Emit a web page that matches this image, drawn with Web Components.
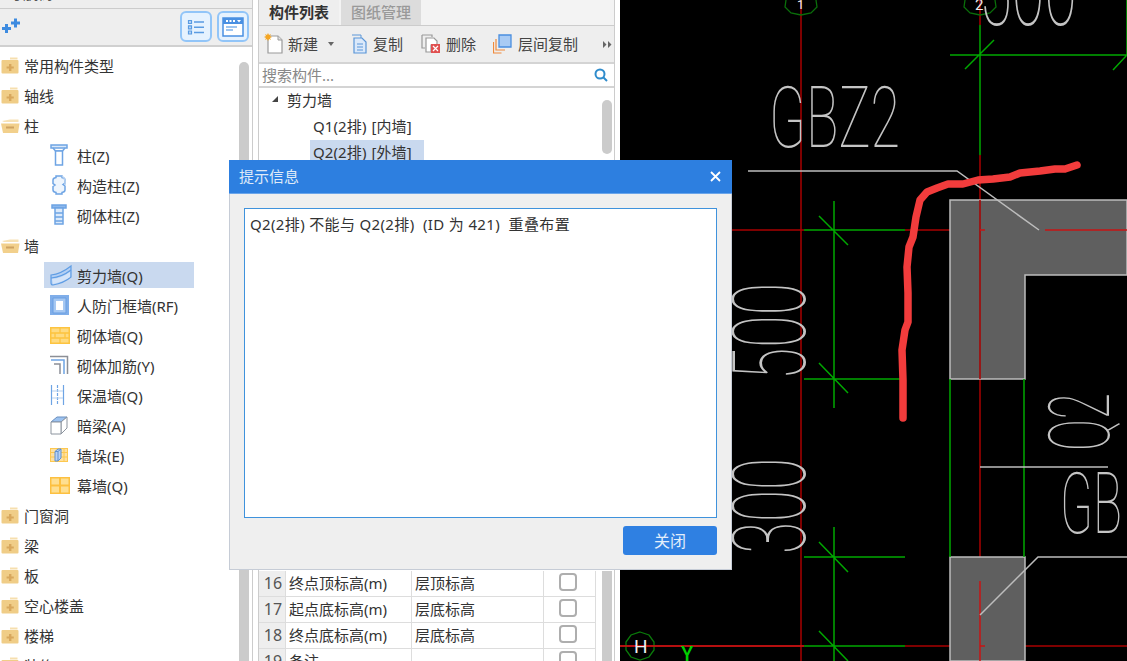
<!DOCTYPE html>
<html lang="zh">
<head>
<meta charset="utf-8">
<title>构件列表</title>
<style>
html,body{margin:0;padding:0;height:661px;overflow:hidden;background:#fff}
body{font:15px "Noto Sans","Noto Sans CJK SC",sans-serif;color:#333}
</style>
</head>
<body>
<app-shell>
  <nav-panel slot="nav">
    <tree-row icon="closed">常用构件类型</tree-row>
    <tree-row icon="closed">轴线</tree-row>
    <tree-row icon="open">柱</tree-row>
    <tree-row level="2" icon="column">柱(Z)</tree-row>
    <tree-row level="2" icon="gzz">构造柱(Z)</tree-row>
    <tree-row level="2" icon="qtz">砌体柱(Z)</tree-row>
    <tree-row icon="open">墙</tree-row>
    <tree-row level="2" icon="shear" selected>剪力墙(Q)</tree-row>
    <tree-row level="2" icon="frame">人防门框墙(RF)</tree-row>
    <tree-row level="2" icon="brick">砌体墙(Q)</tree-row>
    <tree-row level="2" icon="rebar">砌体加筋(Y)</tree-row>
    <tree-row level="2" icon="insul">保温墙(Q)</tree-row>
    <tree-row level="2" icon="beam">暗梁(A)</tree-row>
    <tree-row level="2" icon="pier">墙垛(E)</tree-row>
    <tree-row level="2" icon="curtain">幕墙(Q)</tree-row>
    <tree-row icon="closed">门窗洞</tree-row>
    <tree-row icon="closed">梁</tree-row>
    <tree-row icon="closed">板</tree-row>
    <tree-row icon="closed">空心楼盖</tree-row>
    <tree-row icon="closed">楼梯</tree-row>
    <tree-row icon="closed">装修</tree-row>
  </nav-panel>
  <comp-panel slot="comp">
    <prop-row n="16" name="终点顶标高(m)" value="层顶标高"></prop-row>
    <prop-row n="17" name="起点底标高(m)" value="层底标高"></prop-row>
    <prop-row n="18" name="终点底标高(m)" value="层底标高"></prop-row>
    <prop-row n="19" name="备注" value=""></prop-row>
  </comp-panel>
  <cad-view slot="cad"></cad-view>
</app-shell>
<msg-dialog heading="提示信息" action="关闭">Q2(2排) 不能与 Q2(2排) &nbsp;(ID 为 421) &nbsp;重叠布置</msg-dialog>

<script>
const ICONS = {
closed:`<svg width="18" height="18" viewBox="0 0 18 18"><path d="M9 1.500h7.500v2H9z" fill="#f6dfae"/><path d="M1 5.500Q1 4.500 2 4.500H17Q18 4.500 18 5.500V17Q18 18 17 18H2Q1 18 1 17z" fill="#f0cd87" transform="translate(-.5 -.5)"/><path d="M8 8h2.400v2.400h2.400v2.200h-2.400v2.400H8v-2.400H5.600v-2.200H8z" fill="#d8a75c"/></svg>`,
open:`<svg width="19" height="18" viewBox="0 0 19 18"><path d="M1 5l8-1.500h8.500V6H3z" fill="#f7e2b5"/><path d="M0 7.500H18.500L17 17H2z" fill="#f2d08c"/><path d="M5 10.500h8v2H5z" fill="#cfa261"/></svg>`,
column:`<svg width="18" height="22" viewBox="0 0 18 22" fill="none" stroke="#6ea4e4" stroke-width="1.500"><path d="M1 1h16v3H1z" fill="#dbe9fa"/><path d="M3 4l2.500 3h7L15 4" /><path d="M5.500 7h7v14h-7z" fill="#fff"/></svg>`,
gzz:`<svg width="18" height="22" viewBox="0 0 18 22" fill="none" stroke="#6ea4e4" stroke-width="1.500"><path d="M6 2h6v1.500q3 .5 3 2.500v3l-2 1.500 2 1.500v4q0 2-3 2.500V20H6v-1.500q-3-.5-3-2.500v-3.500l2-1.500-2-1.500V6q0-2 3-2.500z" fill="#eef5fd"/><path d="M12 2q4 3 3 9" stroke="#b7d1f0"/></svg>`,
qtz:`<svg width="18" height="22" viewBox="0 0 18 22" fill="none" stroke="#6ea4e4" stroke-width="1.500"><path d="M2 1h14v3H2z" fill="#8db8ec"/><path d="M5 4h8v16H5z" fill="#dbe9fa"/><path d="M5 9h8M5 13h8M5 17h8" stroke="#6ea4e4"/></svg>`,
shear:`<svg width="22" height="22" viewBox="0 0 22 22"><path d="M1 11Q11 10 21 2V13Q14 19 3 21Q1 21 1 19z" fill="#b4d0f4" stroke="#5f9de4" stroke-width="1.200"/><path d="M1 14Q12 13 21 6" fill="none" stroke="#5f9de4" stroke-width="1.200"/><path d="M2 15Q12 14 20 8V13Q13 18 3 20z" fill="#d4e4f9"/></svg>`,
frame:`<svg width="19" height="20" viewBox="0 0 19 20"><path d="M0 0h19v20H0z" fill="#80aee9"/><path d="M3 3h13v15H3z" fill="#a6c8f2" stroke="#6a9fe2"/><path d="M6 6h7v9H6z" fill="#fff"/></svg>`,
brick:`<svg width="20" height="17" viewBox="0 0 20 17"><path d="M0 0h20v17H0z" fill="#fdc43f"/><path d="M1.500 1.500h17v14h-17z" fill="#fedb82"/><path d="M1 6h18M1 11h18M10 1v5M5 6v5M15 6v5M10 11v5" stroke="#fdc43f" stroke-width="1.300"/></svg>`,
rebar:`<svg width="19" height="20" viewBox="0 0 19 20" fill="none"><path d="M0 1.500h17.500V19" stroke="#8c8f96" stroke-width="1.500"/><path d="M1 5h13v14" stroke="#6ea4e4" stroke-width="1.500"/><path d="M4 9h6v10" stroke="#8c8f96" stroke-width="1.500"/></svg>`,
insul:`<svg width="15" height="20" viewBox="0 0 15 20" fill="none" stroke="#6ea4e4" stroke-width="1.200"><path d="M1.500 0v20M13.500 0v20"/><path d="M7.500 0v20" stroke-dasharray="3 1"/><path d="M2 6h11M2 13h11" stroke="#b4cff0"/></svg>`,
beam:`<svg width="18" height="20" viewBox="0 0 18 20"><path d="M1 7l6-5h10l-6 5z" fill="#9cc2f0" stroke="#6b8fbe"/><path d="M11 7l6-5v11l-6 6z" fill="#fff" stroke="#8c949e"/><path d="M1 7h10v12H1z" fill="#fff" stroke="#8c949e"/></svg>`,
pier:`<svg width="18" height="14" viewBox="0 0 18 14"><path d="M0 0h18v14H0z" fill="#fdc84f"/><path d="M1 1h16v12H1z" fill="#fee0a0"/><path d="M1 4.500h16M1 9h16M14 1v12" stroke="#fdc84f"/><path d="M5 3.500l3-2.500h3v9l-3 3H5z" fill="#b9d2f2" stroke="#5f90d0"/><path d="M5 3.500h3v9.500M8 3.500L11 1" fill="none" stroke="#5f90d0"/></svg>`,
curtain:`<svg width="20" height="17" viewBox="0 0 20 17"><path d="M0 0h20v17H0z" fill="#fdc040"/><path d="M1.500 1.500h7.500v6H1.500zM11 1.500h7.500v6H11zM1.500 9.500h7.500v6H1.500zM11 9.500h7.500v6H11z" fill="#fedf91"/></svg>`
};

function sheet(el, html){
  const r = el.shadowRoot || el.attachShadow({mode:'open'});
  r.innerHTML = html;
  return r;
}

customElements.define('app-shell', class extends HTMLElement{
  constructor(){super();sheet(this,`<style>
    :host{display:grid;grid-template-columns:253px 367px 507px;height:661px;overflow:hidden}
  </style><slot name="nav"></slot><slot name="comp"></slot><slot name="cad"></slot>`);}
});

customElements.define('nav-panel', class extends HTMLElement{
  constructor(){super();sheet(this,`<style>
    :host{display:flex;flex-direction:column;height:661px;overflow:hidden;box-sizing:border-box;border-right:1px solid #ccc;background:#fff}
    .cap{flex:none;background:#eee;border-bottom:1px solid #ccc;overflow:hidden;display:flex;align-items:flex-end;padding:0 0 5px 8px;height:3px;color:#555}
    .cap span{line-height:20px;flex:none}
    .bar{height:36px;flex:none;background:#eee;border-bottom:2px solid #d0d0d0;display:flex;align-items:center;padding-right:3px}
    .add{margin:0 auto 0 1px}
    .btn{width:28px;height:27px;border:2px solid #92c5f8;border-radius:6px;background:#e6f2fe;margin-left:5px;display:flex;align-items:center;justify-content:center;margin-top:-1px}
    .body{flex:1;display:flex;min-height:0;padding-top:2px;overflow:hidden}
    .list{flex:1;min-width:0;padding-top:1px}
    .thumb{width:10px;margin:13px 3px 0 0;background:#cbcbcb;border-radius:5px 5px 0 0}
  </style>
  <div class="cap"><span>导航树</span></div>
  <div class="bar">
    <svg class="add" width="24" height="18" viewBox="0 0 24 18"><path d="M10 2.500h3v3h3v3h-3v3h-3v-3H7v-3h3z" transform="translate(3 -2)" fill="#3d8be0"/><path d="M4 6h3v3h3v3H7v3H4v-3H1V9h3z" fill="#3d8be0"/></svg>
    <div class="btn"><svg width="18" height="18" viewBox="0 0 18 18" fill="none" stroke="#5a9be2" stroke-width="1.200"><path d="M1.500 2.500h3v3h-3zM1.500 7.800h3v3h-3zM1.500 13h3v3h-3z" fill="#bcd9f8"/><path d="M7 4h10M7 9.300h10M7 14.500h10" stroke-width="1.500"/></svg></div>
    <div class="btn"><svg width="22" height="20" viewBox="0 0 22 20"><path d="M1 1h20v18H1z" fill="#fff" stroke="#4a90e2" stroke-width="1.500"/><path d="M1 1h20v6H1z" fill="#4a90e2"/><path d="M4 3h2v2H4zM7.500 3h2v2h-2zM11 3h2v2h-2z" fill="#fff"/><path d="M15 3h4l-2 2.500z" fill="#fff"/><path d="M4 10h11M4 13h7" stroke="#7fb2ec" stroke-width="1.300"/></svg></div>
  </div>
  <div class="body"><div class="list"><slot></slot></div><div class="thumb"></div></div>`);}
});

customElements.define('tree-row', class extends HTMLElement{
  connectedCallback(){
    const lv2 = this.getAttribute('level')==='2';
    const sel = this.hasAttribute('selected');
    sheet(this,`<style>
      :host{display:flex;align-items:center;height:30px;white-space:nowrap;color:#333}
      .box{display:flex;align-items:center;height:26px;width:${lv2?'144px':'auto'};margin-left:${lv2?44:1}px;padding-left:${lv2?6:0}px;background:${sel?'#c9d9ef':'transparent'}}
      .ic{width:${lv2?27:23}px;flex:none;display:flex;align-items:center}
    </style><div class="box"><span class="ic">${ICONS[this.getAttribute('icon')]||''}</span><slot></slot></div>`);
  }
});

customElements.define('comp-panel', class extends HTMLElement{
  constructor(){super();sheet(this,`<style>
    :host{display:block;height:661px;overflow:hidden;background:#fff;padding-left:5px;box-sizing:border-box}
    .frame{width:357px;height:661px;box-sizing:border-box;border:solid #ccc;border-width:0 1px;display:flex;flex-direction:column}
    .tabs{height:25px;flex:none;display:flex;background:#f3f3f3;border-bottom:1px solid #ccc}
    .tab{width:80px;display:flex;align-items:center;justify-content:center;background:#eee;font-weight:700;color:#333;box-sizing:border-box;padding-bottom:3px}
    .tab + .tab{margin-left:2px;background:#dcdcdc;color:#999;font-weight:500}
    .tools{height:36px;flex:none;background:#eee;border-bottom:2px solid #d4d4d4;display:flex;align-items:center;color:#444;white-space:nowrap}
    .tools svg{flex:none}
    .tools span{flex:none;padding-bottom:2px}
    .search{height:22px;flex:none;display:flex;align-items:center;padding:0 6px 0 3px;border-bottom:2px solid #d4d4d4;color:#888}
    .search span{flex:1;padding-bottom:2px}
    .list{height:483px;flex:none;display:flex;position:relative;overflow:hidden}
    .rows{flex:1}
    .r{height:26px;display:flex;align-items:center;white-space:nowrap;box-sizing:border-box}
    .r.top{padding-bottom:4px}
    .r.top svg{margin:0 8px 0 12px}
    .r.sub{padding-left:54px;word-spacing:1px;letter-spacing:.1px}
    .r.sub span{padding:0 12px 3px 3px;margin-left:-3px;height:100%;box-sizing:border-box;display:flex;align-items:center}
    .r.on span{background:#c9d9ef}
    .thumb{width:10px;height:54px;margin:12px 2px 0 0;background:#cbcbcb;border-radius:5px}
    .lower{flex:1;display:flex;min-height:0}
    .tbl{width:336px;flex:none;border-right:1px solid #ddd;box-sizing:content-box}
    .sb{width:10px;margin-left:6px;background:#cbcbcb}
  </style>
  <div class="frame">
    <div class="tabs"><div class="tab">构件列表</div><div class="tab">图纸管理</div></div>
    <div class="tools">
      <svg style="margin-left:5px" width="20" height="22" viewBox="0 0 20 22"><path d="M4 3h10l4 4v13H4z" fill="#fff" stroke="#9a9a9a" stroke-width="1.200"/><path d="M14 3v4h4" fill="#e4e4e4" stroke="#9a9a9a"/><path d="M4 0l1 2 2-1-1 2 2 1-2 1 1 2-2-1-1 2-1-2-2 1 1-2-2-1 2-1-1-2 2 1z" fill="#f5a623"/></svg>
      <span style="margin-left:4px">新建</span>
      <svg style="margin-left:10px" width="6" height="4" viewBox="0 0 6 4"><path d="M0 0h6L3 4z" fill="#666"/></svg>
      <svg style="margin-left:17px" width="16" height="20" viewBox="0 0 16 20"><path d="M1 1h9v3" fill="none" stroke="#5a96d8"/><path d="M3 4h8l4 4v11H3z" fill="#dbe9fa" stroke="#5a96d8" stroke-width="1.200"/><path d="M6 10h6M6 13h6M6 16h6" stroke="#5a96d8"/></svg>
      <span style="margin-left:6px">复制</span>
      <svg style="margin-left:18px" width="20" height="20" viewBox="0 0 20 20"><path d="M1 1h10v2M1 1v13h3" fill="none" stroke="#999" stroke-width="1.200"/><path d="M5 4h8l3 3v4H10v7H5z" fill="#fff" stroke="#999" stroke-width="1.200"/><path d="M10 10h9v9h-9z" fill="#e05050"/><path d="M12 12l5 5M17 12l-5 5" stroke="#fff" stroke-width="1.200"/></svg>
      <span style="margin-left:5px">删除</span>
      <svg style="margin-left:17px" width="19" height="20" viewBox="0 0 19 20" fill="none"><path d="M.5 8v11h8" stroke="#f08a3c" stroke-width="1.200"/><path d="M3 5v11h9" stroke="#f08a3c" stroke-width="1.200"/><path d="M6 1h12v12H6z" fill="#a9cbf4" stroke="#4a8fe0" stroke-width="1.300"/></svg>
      <span style="margin-left:6px">层间复制</span>
      <svg style="margin-left:25px" width="9" height="7" viewBox="0 0 9 7"><path d="M0 0l3.500 3.500L0 7zM5 0l3.500 3.500L5 7z" fill="#666"/></svg>
    </div>
    <div class="search"><span>搜索构件...</span><svg width="14" height="14" viewBox="0 0 14 14" fill="none" stroke="#2f8ccc" stroke-width="2"><circle cx="6" cy="6" r="4.500"/><path d="M9.500 9.500L13 13"/></svg></div>
    <div class="list">
      <div class="rows">
        <div class="r top"><svg width="8" height="8" viewBox="0 0 8 8"><path d="M7 1v6H1z" fill="#444"/></svg>剪力墙</div>
        <div class="r sub"><span>Q1(2排) [内墙]</span></div>
        <div class="r sub on"><span>Q2(2排) [外墙]</span></div>
      </div>
      <div class="thumb"></div>
    </div>
    <div class="lower"><div class="tbl"><slot></slot></div><div class="sb"></div></div>
  </div>`);}
});

customElements.define('prop-row', class extends HTMLElement{
  connectedCallback(){
    sheet(this,`<style>
      :host{display:grid;grid-template-columns:27px 126px 132px 51px;height:26px;box-sizing:border-box;border-bottom:1px solid #ddd;white-space:nowrap}
      div{display:flex;align-items:center;box-sizing:border-box;border-right:1px solid #ddd}
      .n{background:#eee;justify-content:center;color:#555;font-size:16px;padding-left:2px;padding-bottom:2px}
      .t{padding-left:3px;padding-bottom:2px}
      .c{justify-content:center;border-right:0;padding:0 3px 3px 0}
      i{display:block;width:18px;height:18px;box-sizing:border-box;border:2px solid #aeaeae;border-radius:4px;background:#fff}
    </style><div class="n">${this.getAttribute('n')}</div><div class="t">${this.getAttribute('name')}</div><div class="t">${this.getAttribute('value')}</div><div class="c"><i></i></div>`);
  }
});

customElements.define('cad-view', class extends HTMLElement{
  constructor(){super();sheet(this,`<style>
    :host{display:block;height:661px;background:#000;overflow:hidden}
    svg{display:block}
    .g{stroke:#00a800;stroke-width:1.500;fill:none}
    .r{stroke:#a80000;stroke-width:1.500;fill:none}
    .rb{stroke:#c81414;stroke-width:1.500;fill:none}
    .w{stroke:#bdbdbd;stroke-width:1.500;fill:none}
    text{font-family:Roboto,"Noto Sans",sans-serif;font-weight:100;fill:#c4c4c4}
  </style>
  <svg width="507" height="661" viewBox="620 0 507 661">
    <path class="r" d="M801 0V661M980 0V25M980 155V201M620 646H804M905 646H950M1025 646H1127"/>
    <path class="r" d="M732 230H804M905 230H950M980 230V558"/>
    <path class="g" d="M980 25V155M950 55H1127M965 69L994 40M1113 70L1127 55M1127 0V55"/>
    <path d="M950 200H1127V275H1025V379H950z" fill="#5f5f5f" stroke="#bdbdbd" stroke-width="1.500"/>
    <path d="M950 557H1025V661H950z" fill="#5f5f5f" stroke="#bdbdbd" stroke-width="1.500"/>
    <path class="r" d="M980 200V379"/>
    <path class="rb" d="M980 230H985M1045 230H1127M980 581V661M980 646H985"/>
    <path class="g" d="M804 230H905M834 201V408M819 216L848 245M804 379H903M819 363L848 393"/>
    <path class="g" d="M804 557H905M834 527V661M819 542L848 572M804 646H905M819 631L848 661M950 379V557M1024 379V557"/>
    <path class="w" d="M748 171H957L1039 230M980 467H1108M980 615L1038 557H1127"/>
    <path d="M786 0l-1 7 6 6 10 2 10-2 6-6-1-7M965 0l-1 7 6 6 10 2 10-2 6-6-1-7" fill="none" stroke="#0a6e0a" stroke-width="1.300"/>
    <text x="797" y="9" font-size="13" style="fill:#eee;font-weight:400">1</text>
    <text x="975" y="10" font-size="15" style="fill:#eee;font-weight:400">2</text>
    <path d="M640 632l9 3 5 7v8l-5 7-9 3-9-3-5-7v-8l5-7z" fill="none" stroke="#0a7a0a" stroke-width="1.300"/>
    <path class="rb" d="M620 646H804"/>
    <text x="634" y="653" font-size="19" style="font-weight:400;fill:#eee">H</text>
    <text x="681" y="661" font-size="20" style="font-weight:500;fill:#00d000">Y</text>
    <text x="769" y="147" font-size="86" textLength="131" lengthAdjust="spacingAndGlyphs">GBZ2</text>
    <text x="1060" y="533" font-size="86" textLength="62" lengthAdjust="spacingAndGlyphs">GB</text>
    <text x="979" y="25" font-size="100" textLength="98" lengthAdjust="spacingAndGlyphs">500</text>
    <text transform="translate(805 380) rotate(-90)" font-size="102" textLength="97" lengthAdjust="spacingAndGlyphs">500</text>
    <text transform="translate(805 554) rotate(-90)" font-size="102" textLength="96" lengthAdjust="spacingAndGlyphs">300</text>
    <text transform="translate(1109 451) rotate(-90)" font-size="86" textLength="58" lengthAdjust="spacingAndGlyphs">Q2</text>
    <path d="M1077 165L1065 169 1055 169 1040 171 1020 173 1010 177 993 179 978 180 963 184 948 184 937 188 927 192 920 200 916 217 913 237 909 247 907 267 908 293 908 322 905 330 902 350 903 380 903 418" fill="none" stroke="#f23c3c" stroke-width="7.500" stroke-linecap="round" stroke-linejoin="round"/>
  </svg>`);}
});

customElements.define('msg-dialog', class extends HTMLElement{
  constructor(){super();sheet(this,`<style>
    :host{display:flex;flex-direction:column;position:absolute;left:229px;top:160px;width:503px;height:410px;box-sizing:border-box;background:#efefef;border:1px solid #c6ccd6;border-top:0;color:#333}
    .head{height:33px;flex:none;margin:0 -1px;background:#2d7fe0;border-bottom:1px solid #6aa5ea;color:#dfeaf8;display:flex;align-items:center;justify-content:space-between;padding:0 11px 0 10px}
    .head span{padding-bottom:2px}
    .x{width:11px;height:11px}
    .txt{margin:14px 14px 0;height:310px;flex:none;box-sizing:border-box;background:#fff;border:1px solid #3f92dc;padding:4px 5px;white-space:nowrap;letter-spacing:.35px}
    .foot{display:flex;justify-content:flex-end;padding:8px 14px 0}
    .btn{width:94px;height:29px;box-sizing:border-box;padding-bottom:1px;background:#2f80e2;border-radius:3px;color:#e4eefb;font-size:16px;display:flex;align-items:center;justify-content:center}
  </style>
  <div class="head"><span></span><svg class="x" viewBox="0 0 11 11"><path d="M1 1l9 9M10 1l-9 9" stroke="#fff" stroke-width="1.800"/></svg></div>
  <div class="txt"><slot></slot></div>
  <div class="foot"><div class="btn"></div></div>`);}
  connectedCallback(){
    this.shadowRoot.querySelector('.head span').textContent=this.getAttribute('heading');
    this.shadowRoot.querySelector('.btn').textContent=this.getAttribute('action');
  }
});
</script>
</body>
</html>
